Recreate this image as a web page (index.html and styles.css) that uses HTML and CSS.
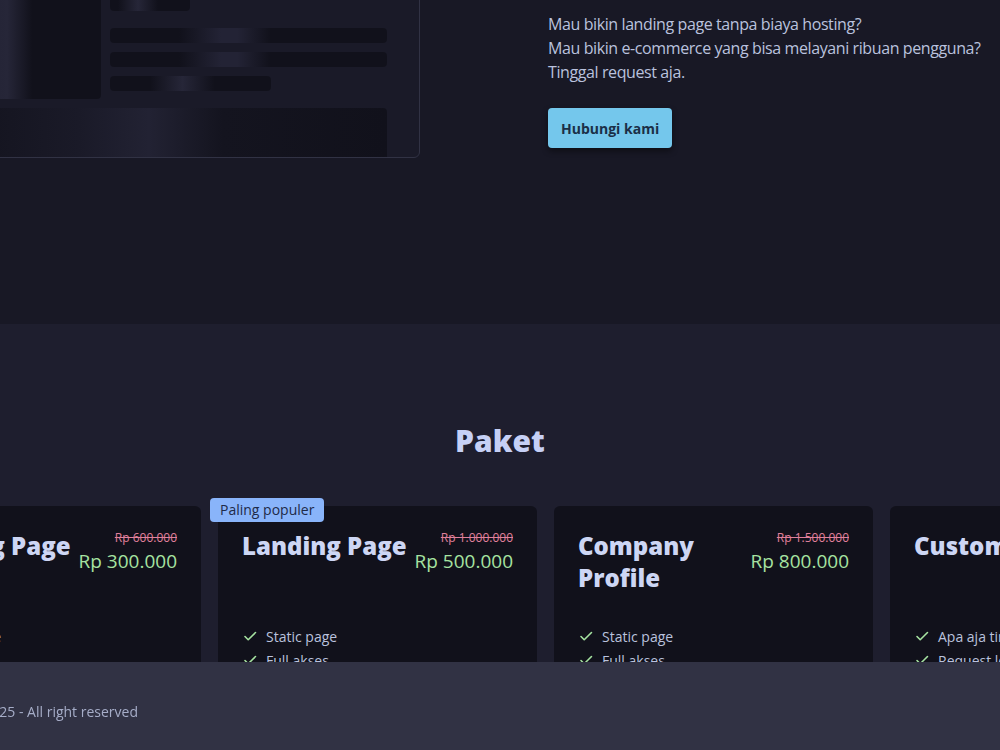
FILE: index.html
```html
<!DOCTYPE html>
<html lang="id">
<head>
  <meta charset="UTF-8">
  <meta name="viewport" content="width=device-width, initial-scale=1.0">
  <title>Paket Website</title>
  <link rel="stylesheet" href="styles.css">
</head>
<body>
  <section class="hero">
    <!-- preview mockup, skeleton style -->
    <div class="mock">
      <div class="mock-top">
        <div class="sk sk-thumb"></div>
        <div class="mock-lines">
          <div class="sk sk-title"></div>
          <div class="sk sk-line shine-a"></div>
          <div class="sk sk-line shine-a"></div>
          <div class="sk sk-line sk-short"></div>
        </div>
      </div>
      <div class="sk sk-block"></div>
    </div>

    <div class="hero-text">
      <p>
        Mau bikin landing page tanpa biaya hosting?<br>
        Mau bikin e-commerce yang bisa melayani ribuan pengguna?<br>
        Tinggal request aja.
      </p>
      <a href="#kontak" class="button">Hubungi kami</a>
    </div>
  </section>

  <section class="paket">
    <h2>Paket</h2>

    <div class="cards">
      <div class="card">
        <div class="card-head">
          <h3>Landing Page</h3>
          <div class="price">
            <s>Rp 600.000</s>
            <span>Rp 300.000</span>
          </div>
        </div>
        <ul class="features">
          <li><svg viewBox="0 0 16 16"><path d="M3 8.5l3.2 3.2L13.5 4.5"/></svg>Static page</li>
          <li><svg viewBox="0 0 16 16"><path d="M3 8.5l3.2 3.2L13.5 4.5"/></svg>Full akses</li>
        </ul>
      </div>

      <div class="card">
        <span class="badge">Paling populer</span>
        <div class="card-head">
          <h3>Landing Page</h3>
          <div class="price">
            <s>Rp 1.000.000</s>
            <span>Rp 500.000</span>
          </div>
        </div>
        <ul class="features">
          <li><svg viewBox="0 0 16 16"><path d="M3 8.5l3.2 3.2L13.5 4.5"/></svg>Static page</li>
          <li><svg viewBox="0 0 16 16"><path d="M3 8.5l3.2 3.2L13.5 4.5"/></svg>Full akses</li>
        </ul>
      </div>

      <div class="card">
        <div class="card-head">
          <h3>Company<br>Profile</h3>
          <div class="price">
            <s>Rp 1.500.000</s>
            <span>Rp 800.000</span>
          </div>
        </div>
        <ul class="features">
          <li><svg viewBox="0 0 16 16"><path d="M3 8.5l3.2 3.2L13.5 4.5"/></svg>Static page</li>
          <li><svg viewBox="0 0 16 16"><path d="M3 8.5l3.2 3.2L13.5 4.5"/></svg>Full akses</li>
        </ul>
      </div>

      <div class="card">
        <div class="card-head">
          <h3>Custom</h3>
          <div class="price">
            <span>Nego</span>
          </div>
        </div>
        <ul class="features">
          <li><svg viewBox="0 0 16 16"><path d="M3 8.5l3.2 3.2L13.5 4.5"/></svg>Apa aja tinggal request</li>
          <li><svg viewBox="0 0 16 16"><path d="M3 8.5l3.2 3.2L13.5 4.5"/></svg>Request lebih cepat</li>
        </ul>
      </div>
    </div>
  </section>

  <footer>
    <div class="footer-inner">
      <span>Copyright &copy; 2025 - All right reserved</span>
    </div>
  </footer>
</body>
</html>
```

FILE: styles.css
```css
html, body {
  overflow: hidden;
}
body {
  margin: 0;
  background-color: #181825;
  color: #cdd6f4;
  font-family: "Open Sans", Arial, sans-serif;
  height: 750px;
}

/* hero */
.hero {
  display: flex;
  align-items: flex-start;
  gap: 128px;
  margin-top: -140px;
  padding-bottom: 166px;
}
.mock {
  flex-shrink: 0;
  box-sizing: border-box;
  width: 461px;
  height: 298px;
  margin-left: -41px;
  padding: 16px 32px 0 16px;
  border: 1px solid #313244;
  border-radius: 6px;
  overflow: hidden;
  background-color: #1a1a28;
}
.mock-top {
  display: grid;
  grid-template-columns: 125px 1fr;
  gap: 9px;
}
.mock-lines {
  display: flex;
  flex-direction: column;
  justify-content: flex-end;
  gap: 9px;
  padding-bottom: 8px;
}
.sk {
  border-radius: 4px;
  background-color: #11111b;
}
.sk-thumb {
  height: 222px;
  background: linear-gradient(90deg, #222234 0%, #262638 25%, #11111b 45%, #11111b 100%);
}
.sk-title {
  width: 80px;
  height: 40px;
  margin-bottom: 8px;
  background: linear-gradient(90deg, #11111b 0%, #11111b 10%, #262638 35%, #11111b 60%);
}
.sk-line {
  height: 15px;
}
.shine-a {
  background: linear-gradient(90deg, #11111b 0%, #11111b 25%, #232335 40%, #232335 46%, #11111b 58%, #11111b 100%);
}
.sk-short {
  width: 161px;
  background: linear-gradient(90deg, #11111b 0%, #11111b 25%, #262638 45%, #11111b 65%, #11111b 100%);
}
.sk-block {
  margin-top: 9px;
  height: 80px;
  background: linear-gradient(90deg, #14141f 0%, #1a1a28 25%, #222233 42%, #14141f 60%, #11111b 100%);
}

.hero-text {
  flex-shrink: 0;
  margin-top: 152px;
  white-space: nowrap;
}
.hero-text p {
  margin: 0 0 24px;
  font-size: 16px;
  line-height: 24px;
  letter-spacing: -0.4px;
  color: #bac2de;
}
.button {
  display: inline-flex;
  align-items: center;
  height: 40px;
  padding: 0 13px;
  background-color: #74c7ec;
  color: #1b2f47;
  font-size: 14px;
  font-weight: bold;
  text-decoration: none;
  border-radius: 4px;
  box-shadow: 0 3px 6px rgba(0, 0, 0, 0.45);
}

/* paket */
.paket {
  background-color: #1e1e2e;
  padding-top: 99px;
  height: 600px;
}
.paket h2 {
  margin: 0 0 47px;
  text-align: center;
  font-size: 30px;
  font-weight: 800;
  line-height: 36px;
  color: #c6d0f5;
}
.cards {
  display: flex;
  gap: 17px;
  margin-left: -118px;
}
.card {
  position: relative;
  flex: 0 0 319px;
  box-sizing: border-box;
  padding: 24px;
  background-color: #11111b;
  border-radius: 6px;
  height: 300px;
}
.badge {
  position: absolute;
  top: -8px;
  left: -8px;
  padding: 0 10px;
  height: 24px;
  line-height: 24px;
  font-size: 14px;
  color: #1e2a48;
  background-color: #89b4fa;
  border-radius: 4px;
}
.card-head {
  display: flex;
  justify-content: space-between;
  align-items: flex-start;
  min-height: 64px;
}
.card-head h3 {
  margin: 0;
  font-size: 24px;
  font-weight: 800;
  line-height: 32px;
  color: #cdd6f4;
}
.price {
  display: flex;
  flex-direction: column;
  align-items: flex-end;
}
.price s {
  font-size: 12px;
  line-height: 16px;
  color: #e0809c;
}
.price span {
  margin-top: 3px;
  font-size: 19px;
  line-height: 24px;
  color: #a6e3a1;
}
.features {
  list-style: none;
  margin: 30px 0 0;
  padding: 0;
}
.features li {
  display: flex;
  align-items: center;
  gap: 8px;
  height: 24px;
  font-size: 14px;
  color: #bac2de;
  white-space: nowrap;
}
.features svg {
  width: 16px;
  height: 16px;
  fill: none;
  stroke: #a6e3a1;
  stroke-width: 1.6;
  stroke-linecap: round;
  stroke-linejoin: round;
}

/* footer stays pinned to the bottom */
footer {
  position: fixed;
  left: 0;
  right: 0;
  bottom: 0;
  height: 88px;
  background-color: #313244;
  display: flex;
  align-items: center;
  padding-top: 10px;
  box-sizing: border-box;
}
.footer-inner {
  width: 138px;
  display: flex;
  justify-content: flex-end;
  white-space: nowrap;
  font-size: 14px;
  color: #a6adc8;
}
```
